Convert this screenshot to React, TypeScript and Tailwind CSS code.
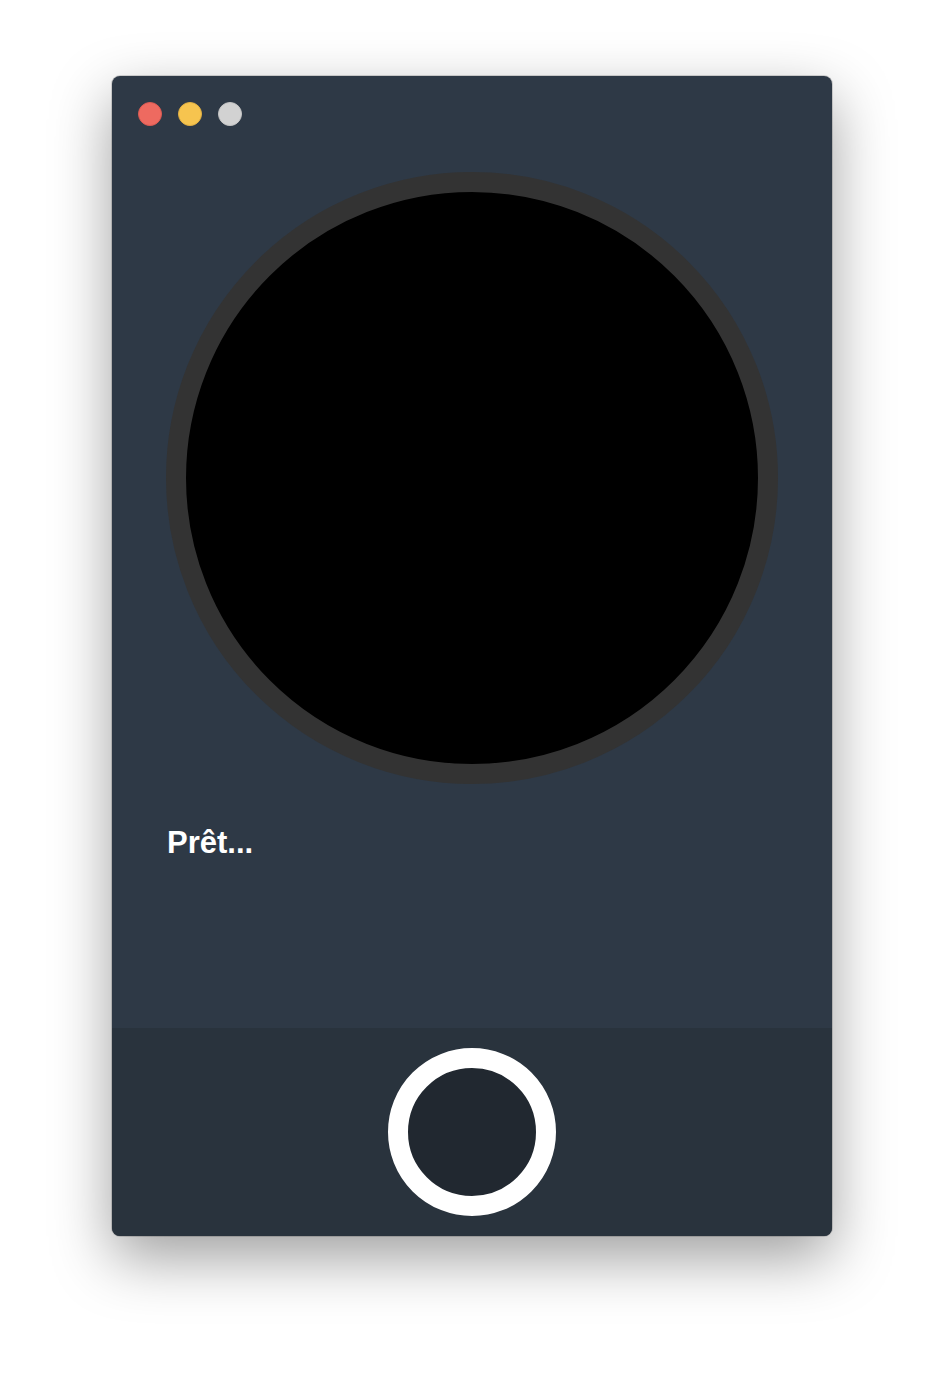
import React from "react";

export default function App() {
  return (
    <div className="min-h-screen w-full bg-white flex justify-center pt-[76px] pb-[148px]" style={{ fontFamily: '"Liberation Sans", Arial, sans-serif' }}>
      <div className="w-[720px] h-[1160px] rounded-[8px] bg-[#2e3946] flex flex-col overflow-hidden shadow-[0_22px_60px_rgba(0,0,0,0.38)] ring-1 ring-black/15">
        <div className="flex gap-4 pl-[26px] pt-[26px]">
          <div className="w-6 h-6 rounded-full bg-[#ee6a60] border border-[#dc5a52]" />
          <div className="w-6 h-6 rounded-full bg-[#f6c44f] border border-[#e2b042]" />
          <div className="w-6 h-6 rounded-full bg-[#d2d2d2] border border-[#c4c4c4]" />
        </div>
        <div className="flex-1 px-[54px] pt-[46px]">
          <div className="w-[612px] h-[612px] rounded-full border-[20px] border-[#333333] bg-black" />
          <div className="mt-[44px] pl-[1px] text-[31px] leading-[30px] font-bold text-white">Prêt...</div>
        </div>
        <div className="h-[208px] bg-[#29333d] flex items-center justify-center">
          <button className="w-[168px] h-[168px] rounded-full border-[20px] border-white bg-[#212830]" />
        </div>
      </div>
    </div>
  );
}
